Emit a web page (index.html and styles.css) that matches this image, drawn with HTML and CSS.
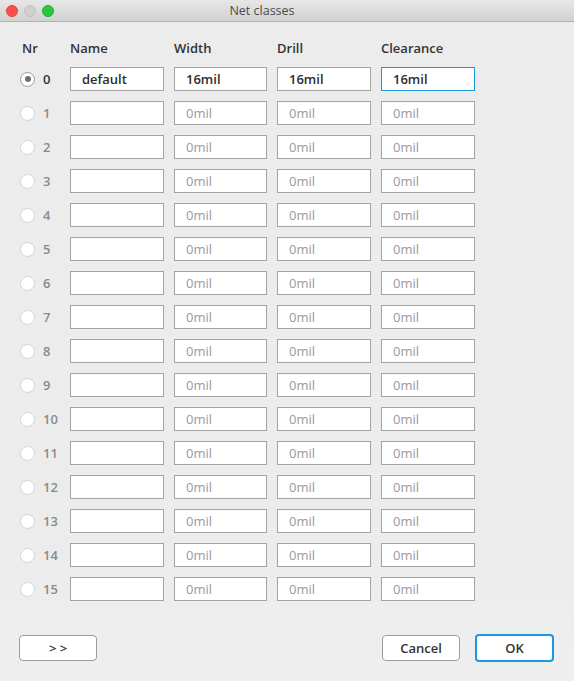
FILE: index.html
```html
<!DOCTYPE html>
<html lang="en">
<head>
  <meta charset="UTF-8">
  <meta name="viewport" content="width=device-width, initial-scale=1.0">
  <title>Net classes</title>
  <link rel="stylesheet" href="styles.css">
</head>
<body>
  <div class="window">
    <div class="titlebar">
      <div class="lights">
        <span class="light red"></span>
        <span class="light gray"></span>
        <span class="light green"></span>
      </div>
      <div class="title">Net classes</div>
    </div>

    <div class="content">
      <div class="grid" id="grid">
        <div class="head nr-head">Nr</div>
        <div class="head">Name</div>
        <div class="head">Width</div>
        <div class="head">Drill</div>
        <div class="head">Clearance</div>
      </div>
    </div>

    <div class="footer">
      <button class="btn">&gt; &gt;</button>
      <div class="right">
        <button class="btn">Cancel</button>
        <button class="btn default">OK</button>
      </div>
    </div>
  </div>

  <script src="app.js"></script>
</body>
</html>
```

FILE: styles.css
```css
* {
  box-sizing: border-box;
}
body {
  margin: 0;
  font-family: "Open Sans", "Noto Sans", sans-serif;
  font-size: 13px;
  color: #333;
  background-color: #ececec;
}
.window {
  width: 574px;
  height: 681px;
  display: flex;
  flex-direction: column;
  background: linear-gradient(#ececec 80%, #efefef);
}
.titlebar {
  height: 22px;
  display: flex;
  align-items: center;
  padding-left: 6px;
  background: linear-gradient(#e8e7e8, #d2d1d2);
  border-bottom: 1px solid #b1b1b1;
}
.lights {
  display: flex;
  gap: 6px;
}
.light {
  width: 12px;
  height: 12px;
  border-radius: 50%;
}
.red {
  background-color: #fd4f4b;
  border: 1px solid #e2403c;
}
.gray {
  background-color: #d1d0d1;
  border: 1px solid #c2c1c2;
}
.green {
  background-color: #29c73f;
  border: 1px solid #1eae31;
}
.title {
  flex: 1;
  text-align: center;
  padding-right: 104px;
  color: #4a4a4a;
  font-size: 12.5px;
}
.content {
  padding: 15px 0 0 20px;
}
.grid {
  display: grid;
  grid-template-columns: 40px 94px 93px 94px 94px;
  grid-template-rows: 20px;
  grid-auto-rows: 24px;
  column-gap: 10px;
  row-gap: 10px;
}
.head {
  display: flex;
  align-items: flex-end;
  font-weight: 600;
  color: #333;
  line-height: 18px;
}
.nr-head {
  padding-left: 2px;
}
.nr {
  display: flex;
  align-items: center;
  gap: 8px;
  color: #8a8a8a;
  font-weight: 600;
}
.nr.active {
  color: #333;
}
.radio {
  width: 15px;
  height: 15px;
  border-radius: 50%;
  background-color: #fff;
  border: 1px solid #d4d4d4;
  display: flex;
  align-items: center;
  justify-content: center;
  flex-shrink: 0;
}
.nr.active .radio {
  border-color: #9a9a9a;
}
.nr.active .radio::after {
  content: "";
  width: 6px;
  height: 6px;
  border-radius: 50%;
  background-color: #6e6e6e;
}
.field {
  height: 24px;
  border: 1px solid #a3a3a3;
  background-color: #fff;
  padding: 0 11px;
  display: flex;
  align-items: center;
  font-weight: 600;
  color: #2d2d2d;
}
.field.empty {
  color: #9a9a9a;
  font-weight: 400;
}
.field.focus {
  border-color: #1a98e0;
}
.footer {
  margin-top: auto;
  padding: 0 20px 19px 19px;
  display: flex;
  justify-content: space-between;
  align-items: center;
}
.right {
  display: flex;
  gap: 15px;
  align-items: center;
}
.btn {
  width: 78px;
  height: 26px;
  font-family: inherit;
  font-size: 13px;
  font-weight: 600;
  color: #333;
  background-color: #fff;
  border: 1px solid #9c9c9c;
  border-radius: 4px;
  padding: 0;
}
.btn.default {
  border: 2px solid #1a98e0;
  height: 28px;
  width: 79px;
}
```

FILE: app.js
```js
const grid = document.getElementById('grid');

for (let i = 0; i < 16; i++) {
  const nr = document.createElement('div');
  nr.className = i === 0 ? 'nr active' : 'nr';
  nr.innerHTML = `<span class="radio"></span><span>${i}</span>`;
  grid.appendChild(nr);

  const name = document.createElement('div');
  name.className = 'field';
  name.textContent = i === 0 ? 'default' : '';
  grid.appendChild(name);

  ['Width', 'Drill', 'Clearance'].forEach((col, j) => {
    const f = document.createElement('div');
    if (i === 0) {
      f.className = j === 2 ? 'field focus' : 'field';
      f.textContent = '16mil';
    } else {
      f.className = 'field empty';
      f.textContent = '0mil';
    }
    grid.appendChild(f);
  });
}
```
